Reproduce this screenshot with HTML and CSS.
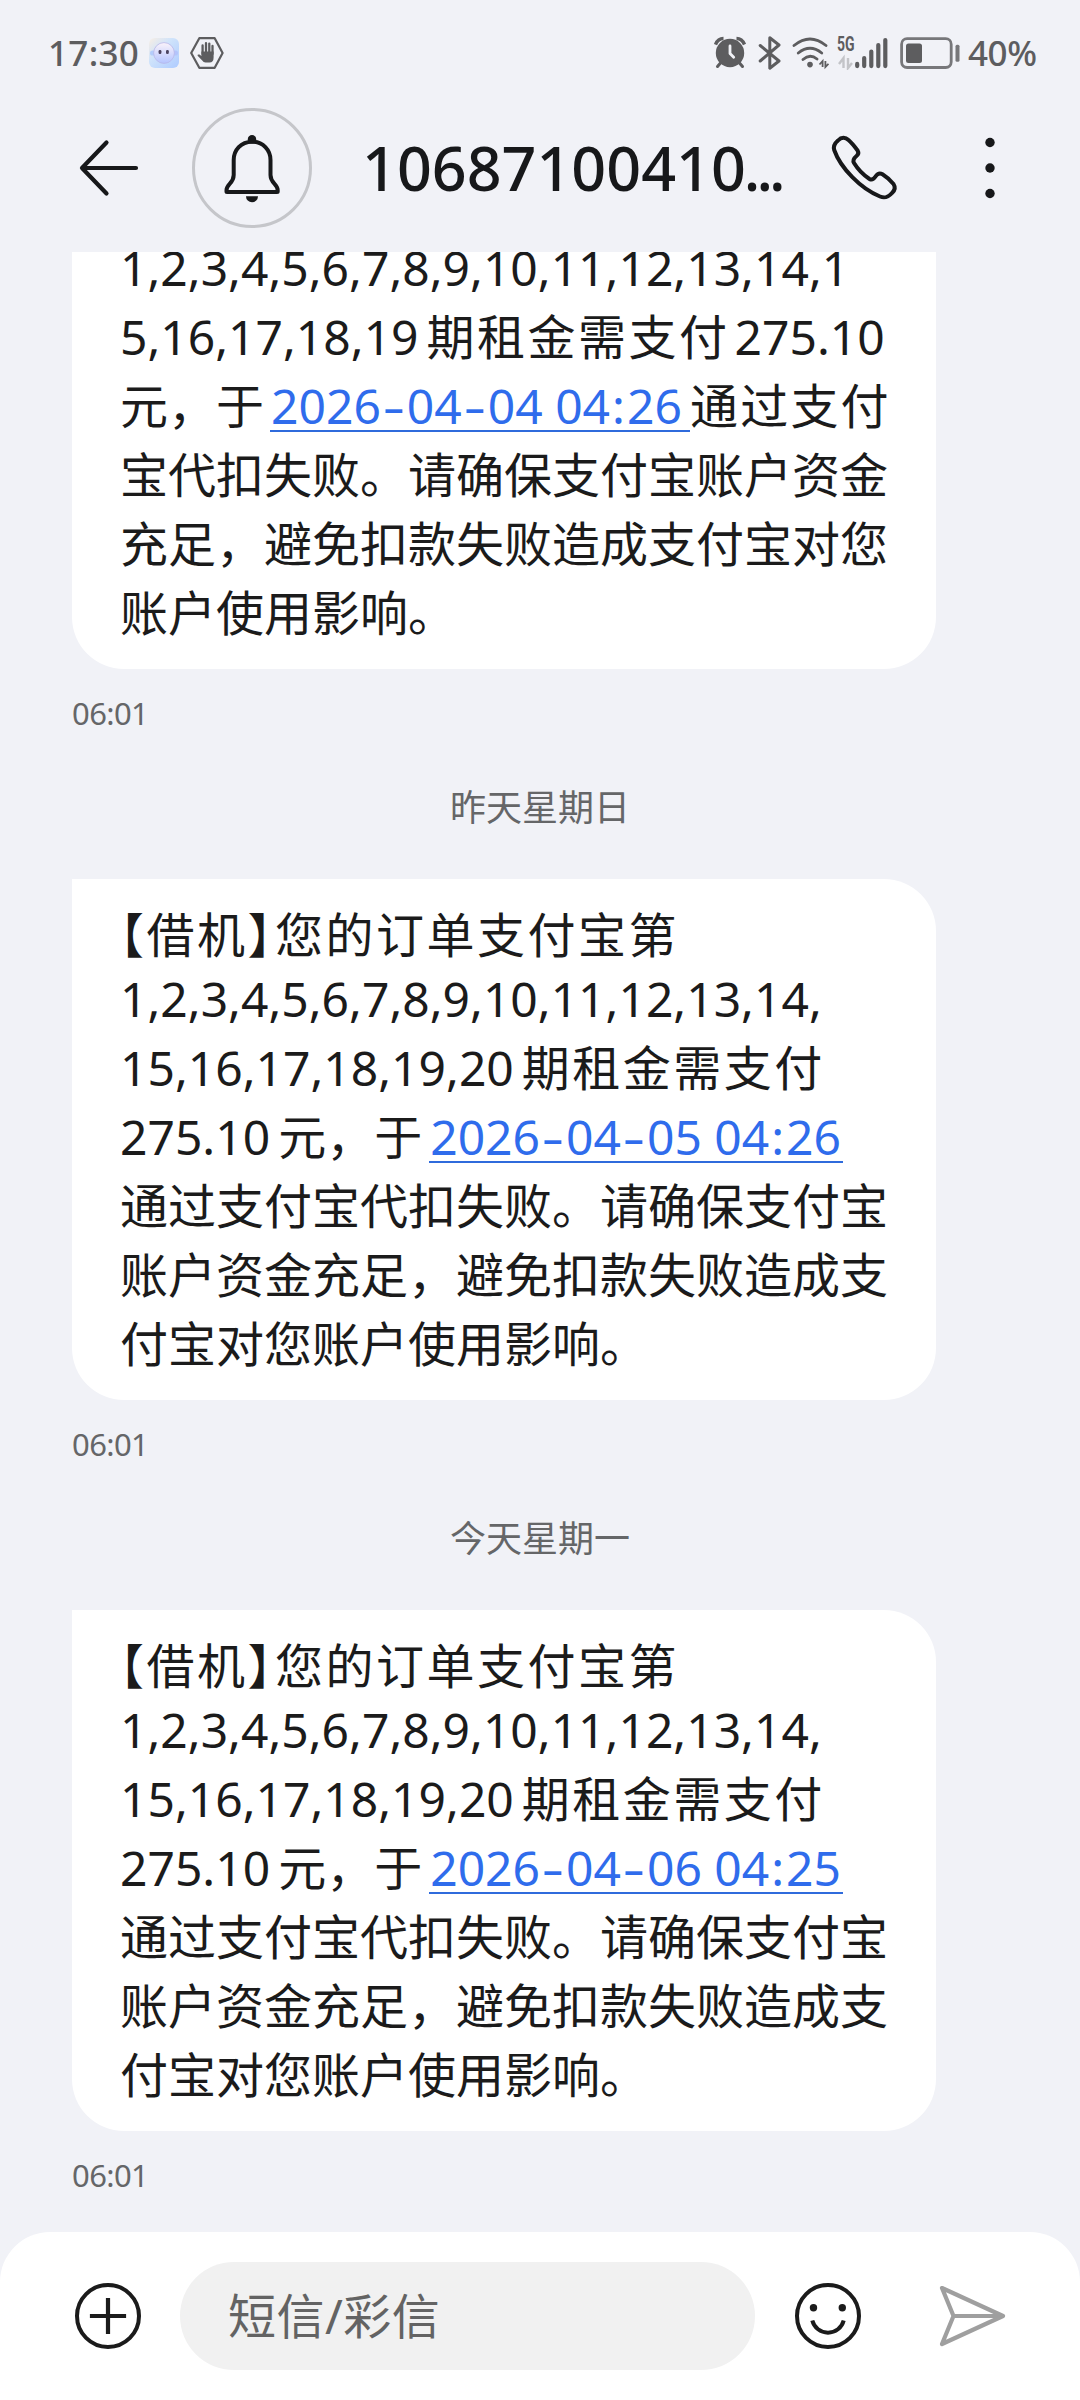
FILE: index.html
```html
<!DOCTYPE html>
<html lang="zh-CN">
<head>
<meta charset="utf-8">
<title>短信</title>
<link rel="stylesheet" href="styles.css">
</head>
<body>
<div class="screen">
  <div class="status">
    <span class="clock">17:30</span>
    <svg class="app" width="30" height="30" viewBox="0 0 30 30">
      <defs>
        <linearGradient id="sky" x1="0" y1="0" x2="1" y2="1"><stop offset="0" stop-color="#f8eee4"/><stop offset=".4" stop-color="#cfe3fb"/><stop offset="1" stop-color="#aecbff"/></linearGradient>
        <linearGradient id="face" x1="0" y1="0" x2="0" y2="1"><stop offset="0" stop-color="#fbf3fa"/><stop offset="1" stop-color="#b4c4ff"/></linearGradient>
      </defs>
      <rect width="30" height="30" rx="6" fill="url(#sky)"/>
      <circle cx="3.6" cy="15" r="2.6" fill="#b4cdfb"/><circle cx="26.4" cy="15" r="2.6" fill="#b4c4fb"/>
      <circle cx="15" cy="15" r="10.4" fill="url(#face)" stroke="#b9b8e8" stroke-width=".8"/>
      <rect x="9.6" y="12" width="2.8" height="4" rx="1.2" fill="#4b4360"/><rect x="17" y="12" width="2.8" height="4" rx="1.2" fill="#4b4360"/>
    </svg>
    <svg class="hex" width="34" height="34" viewBox="0 0 34 34">
      <path d="M9.3 2.2H24.7L32.6 17 24.7 31.8H9.3L1.2 17Z" fill="none" stroke="#5d5d5f" stroke-width="2.2" stroke-linejoin="round"/>
      <path d="M12.6 18V9.5M16 17V7.2M19.3 17V7.6M22.5 18V10" stroke="#5d5d5f" stroke-width="2.3" stroke-linecap="round"/>
      <path d="M11.4 15.500H23.600V21.500Q23.600 26.600 19.500 26.600H15.500Q13.500 26.600 12 24.200L7.600 19.800Q7.200 17.900 9.500 18.600L11.400 20Z" fill="#5d5d5f"/>
    </svg>
    <div class="indicators">
      <svg width="36" height="34" viewBox="0 0 36 34">
        <circle cx="16" cy="17" r="14.200" fill="#5d5d5f"/>
        <path d="M1.500 8.500Q4 2.500 9.500 2.500M22.500 2.500Q28 2.500 30.500 8.500" fill="none" stroke="#5d5d5f" stroke-width="3.400"/>
        <path d="M6.500 27L3.500 30.500M25.500 27L28.500 30.500" stroke="#5d5d5f" stroke-width="3" stroke-linecap="round"/>
        <path d="M16 10V17.500L19.700 21.300" fill="none" stroke="#f1f2f7" stroke-width="2.800" stroke-linecap="round" stroke-linejoin="round"/>
      </svg>
      <svg width="25" height="34" viewBox="0 0 25 34">
        <path d="M2.200 9.500L21 25 11.800 32.200V1.800L21 9 2.200 25" fill="none" stroke="#5d5d5f" stroke-width="3" stroke-linejoin="round" stroke-linecap="round"/>
      </svg>
      <svg width="38" height="34" viewBox="0 0 38 34">
        <path d="M3 9.500Q19 -3.500 35 9.500M7.300 17Q19 7.500 30.700 17M12 23.500Q19 17.200 26 23" fill="none" stroke="#5d5d5f" stroke-width="2.800" stroke-linecap="round"/>
        <circle cx="19" cy="28.600" r="2.800" fill="#5d5d5f"/>
        <path d="M31.600 31V25L28.500 28.500M34.400 25V31L37.500 27.800" fill="none" stroke="#5d5d5f" stroke-width="1.800"/>
      </svg>
      <div class="signal">
        <span class="net">5G</span>
        <svg width="54" height="34" viewBox="0 0 54 34">
          <path d="M6.500 32V22L2 28M11 22V32L15 27" fill="none" stroke="#c3c4c8" stroke-width="2.400"/>
          <path d="M20.200 27.900V30.100M27.200 22V30.100M34.300 15.500V30.100M41.300 9V30.100M48.300 4V30.100" stroke="#5d5d5f" stroke-width="4.200" stroke-linecap="round"/>
        </svg>
      </div>
      <svg width="62" height="34" viewBox="0 0 62 34">
        <rect x="2.600" y="2.700" width="49.600" height="28.800" rx="5.500" fill="none" stroke="#77777a" stroke-width="2.800"/>
        <rect x="7" y="7.500" width="16" height="19.500" rx="2.500" fill="#5d5d5f"/>
        <rect x="56.500" y="8.800" width="4" height="17" rx="1.500" fill="#77777a"/>
      </svg>
      <span class="percent">40%</span>
    </div>
  </div>

  <header class="header">
    <svg class="back" width="64" height="64" viewBox="0 0 64 64">
      <path d="M4 32H58M28.500 6.500L4 32 28.500 57.500" fill="none" stroke="#17181a" stroke-width="4.200" stroke-linecap="round" stroke-linejoin="round"/>
    </svg>
    <div class="bell">
      <svg width="64" height="76" viewBox="0 0 64 76">
        <path d="M32 11.700C21 11.700 13.700 20 13.700 30V45C13.700 53.500 6.500 54 6.500 60.200V61.500Q6.500 62 7 62H57Q57.700 62 57.700 61.500V60.200C57.700 54 50.500 53.500 50.500 45V30C50.500 20 43 11.700 32 11.700Z" fill="none" stroke="#17181a" stroke-width="4" stroke-linejoin="round"/>
        <circle cx="32" cy="9.300" r="4.200" fill="#17181a"/>
        <path d="M26 66.300H38A6 6 0 0 1 26 66.300Z" fill="#17181a"/>
      </svg>
    </div>
    <h1 class="title">10687100410<span class="dots">...</span></h1>
    <svg class="phone" width="72" height="72" viewBox="0 0 72 72">
      <path d="M9 8.500C12.500 4.800 16.500 5.200 19.500 8C23 11 26 15 28.600 18.500C30 21 29.500 22.500 27.500 24C24.500 26.500 23.500 28.500 25 31C29 37.500 34.500 43 40.500 47C42.800 48.300 44.500 47.500 46.500 44.500C48.500 41.500 51 40.800 53.500 42.300C57.500 44.800 61.500 48.500 64.500 52C66.800 55.500 65.700 58.500 63 61C59 65.500 56 66.500 51 64.500C32 57 11.500 36 5.200 18C4 14 5.500 11.500 9 8.500Z" fill="none" stroke="#17181a" stroke-width="4"/>
    </svg>
    <svg class="more" width="12" height="64" viewBox="0 0 12 64">
      <circle cx="6" cy="6.500" r="4.700" fill="#17181a"/><circle cx="6" cy="32" r="4.700" fill="#17181a"/><circle cx="6" cy="57.500" r="4.700" fill="#17181a"/>
    </svg>
  </header>

  <main class="thread">
    <section class="message">
      <div class="bubble bubble-cut">
        <div class="line latin">1,2,3,4,5,6,7,8,9,10,11,12,13,14,1</div>
        <div class="line">5,16,17,18,19<span class="wide gap">期租金需支付</span><span class="amount">275.10</span></div>
        <div class="line">元，于<a class="date date-long">2026<span class="dash">-</span>04<span class="dash">-</span>04 04<span class="colon">:</span>26</a><span class="wide">通过支付</span></div>
        <div class="line">宝代扣失败。请确保支付宝账户资金</div>
        <div class="line">充足，避免扣款失败造成支付宝对您</div>
        <div class="line">账户使用影响。</div>
      </div>
      <div class="time">06:01</div>
    </section>

    <div class="day">昨天星期日</div>
    <section class="message">
      <div class="bubble">
        <div class="line wide"><span class="half">【</span>借机<span class="half close">】</span>您的订单支付宝第</div>
        <div class="line latin">1,2,3,4,5,6,7,8,9,10,11,12,13,14,</div>
        <div class="line">15,16,17,18,19,20<span class="wide gap">期租金需支付</span></div>
        <div class="line">275.10<span class="gap">元，于</span><a class="date">2026<span class="dash">-</span>04<span class="dash">-</span>05 04<span class="colon">:</span>26</a></div>
        <div class="line">通过支付宝代扣失败。请确保支付宝</div>
        <div class="line">账户资金充足，避免扣款失败造成支</div>
        <div class="line">付宝对您账户使用影响。</div>
      </div>
      <div class="time">06:01</div>
    </section>

    <div class="day">今天星期一</div>
    <section class="message">
      <div class="bubble">
        <div class="line wide"><span class="half">【</span>借机<span class="half close">】</span>您的订单支付宝第</div>
        <div class="line latin">1,2,3,4,5,6,7,8,9,10,11,12,13,14,</div>
        <div class="line">15,16,17,18,19,20<span class="wide gap">期租金需支付</span></div>
        <div class="line">275.10<span class="gap">元，于</span><a class="date">2026<span class="dash">-</span>04<span class="dash">-</span>06 04<span class="colon">:</span>25</a></div>
        <div class="line">通过支付宝代扣失败。请确保支付宝</div>
        <div class="line">账户资金充足，避免扣款失败造成支</div>
        <div class="line">付宝对您账户使用影响。</div>
      </div>
      <div class="time">06:01</div>
    </section>
  </main>

  <footer class="composer">
    <svg width="72" height="72" viewBox="0 0 72 72">
      <circle cx="36" cy="36" r="31" fill="none" stroke="#1b1b1b" stroke-width="4"/>
      <path d="M36 20V52M20 36H52" stroke="#1b1b1b" stroke-width="4.200" stroke-linecap="square"/>
    </svg>
    <div class="input">短信/彩信</div>
    <svg width="72" height="72" viewBox="0 0 72 72">
      <circle cx="36" cy="36" r="31" fill="none" stroke="#1b1b1b" stroke-width="4"/>
      <circle cx="21.500" cy="27.700" r="3.700" fill="#1b1b1b"/><circle cx="50.300" cy="27.700" r="3.700" fill="#1b1b1b"/>
      <path d="M20.300 40.500A16.200 16.200 0 0 0 51.700 40.500" fill="none" stroke="#1b1b1b" stroke-width="4"/>
    </svg>
    <svg class="send" width="72" height="72" viewBox="0 0 72 72">
      <path d="M6 8L67 36 6 64 17.500 36ZM17.500 36H67" fill="none" stroke="#9f9f9f" stroke-width="4.200" stroke-linejoin="round"/>
    </svg>
  </footer>
</div>
</body>
</html>
```
FILE: styles.css
```css
* { box-sizing: border-box; }

body {
  margin: 0;
  background: #f1f2f7;
  color: #1b1b1b;
  font-family: "Noto Sans", "Noto Sans CJK SC", sans-serif;
}

.screen {
  display: flex;
  flex-direction: column;
  width: 1080px;
  height: 2400px;
  overflow: hidden;
}

svg { display: block; flex: none; }

/* status bar */
.status {
  display: flex;
  align-items: center;
  height: 104px;
  padding: 2px 36px 0 48px;
  color: #5d5d5f;
  font-size: 35px;
  font-weight: 500;
  line-height: 48px;
}
.clock { width: 101px; letter-spacing: .3px; }
.hex { margin-left: 11px; }
.indicators {
  display: flex;
  align-items: center;
  gap: 8px;
  width: 330px;
  margin-left: auto;
}
.signal { position: relative; width: 54px; }
.net {
  position: absolute;
  left: 0;
  top: -2px;
  font: 700 20px/20px Roboto, sans-serif;
  transform: scaleX(.7);
  transform-origin: 0 50%;
}
.percent { margin-left: -1px; letter-spacing: -.4px; }

/* conversation header */
.header {
  display: flex;
  align-items: center;
  height: 148px;
  padding: 0 84px 20px 78px;
}
.bell {
  display: flex;
  align-items: center;
  justify-content: center;
  width: 120px;
  height: 120px;
  margin-left: 50px;
  border: 3px solid #c5c6ca;
  border-radius: 50%;
}
.title {
  width: 440px;
  margin: 0 0 0 50px;
  color: #17181a;
  font-size: 61px;
  font-weight: 500;
  line-height: 84px;
  white-space: nowrap;
}
.dots { margin-left: -2px; letter-spacing: -4px; }
.phone { margin-left: 27px; }
.more { margin-left: auto; }

/* messages, anchored to the newest one */
.thread {
  display: flex;
  flex-direction: column;
  justify-content: flex-end;
  height: 1980px;
  padding: 0 72px 36px;
  overflow: hidden;
}
.bubble {
  width: 864px;
  padding: 21px 48px 22px;
  background: #fff;
  border-radius: 0 52px 52px 52px;
}
.bubble-cut { border-radius: 0 0 52px 52px; }
.line {
  height: 69px;
  font-size: 48px;
  line-height: 69px;
  white-space: nowrap;
}
.latin { height: 64px; line-height: 59px; }
.wide { letter-spacing: 2.5px; }
.gap { margin-left: 8px; }
.amount { margin-left: 5px; }
.half { font-feature-settings: "halt"; }
.close { margin-right: 1px; }
.date {
  display: inline-block;
  width: 414px;
  height: 69px;
  margin-left: 7px;
  padding-left: 1px;
  background: linear-gradient(#2f6bdc, #2f6bdc) 0 59px / 100% 2px no-repeat;
  color: #2f6cec;
  vertical-align: top;
}
.date-long { width: 420px; margin-left: 6px; }
.date-long + .wide { letter-spacing: 2.2px; }
.dash {
  display: inline-block;
  width: 26px;
  text-align: center;
  transform: scaleX(1.45);
}
.colon { padding: 0 2px; }
.time {
  height: 41px;
  margin-top: 24px;
  color: #656668;
  font-size: 31px;
  line-height: 41px;
  letter-spacing: -.6px;
}
.day {
  height: 54px;
  margin: 47px 0 44px;
  color: #656668;
  font-size: 36px;
  line-height: 54px;
  text-align: center;
}

/* composer */
.composer {
  display: flex;
  align-items: center;
  height: 168px;
  padding: 0 72px;
  background: #fff;
  border-radius: 50px 50px 0 0;
}
.input {
  width: 575px;
  height: 108px;
  margin: 0 37px 0 36px;
  padding-left: 48px;
  border-radius: 54px;
  background: #f1f1f1;
  color: #636363;
  font-size: 48px;
  line-height: 108px;
  letter-spacing: .5px;
}
.send { margin-left: auto; }
```
